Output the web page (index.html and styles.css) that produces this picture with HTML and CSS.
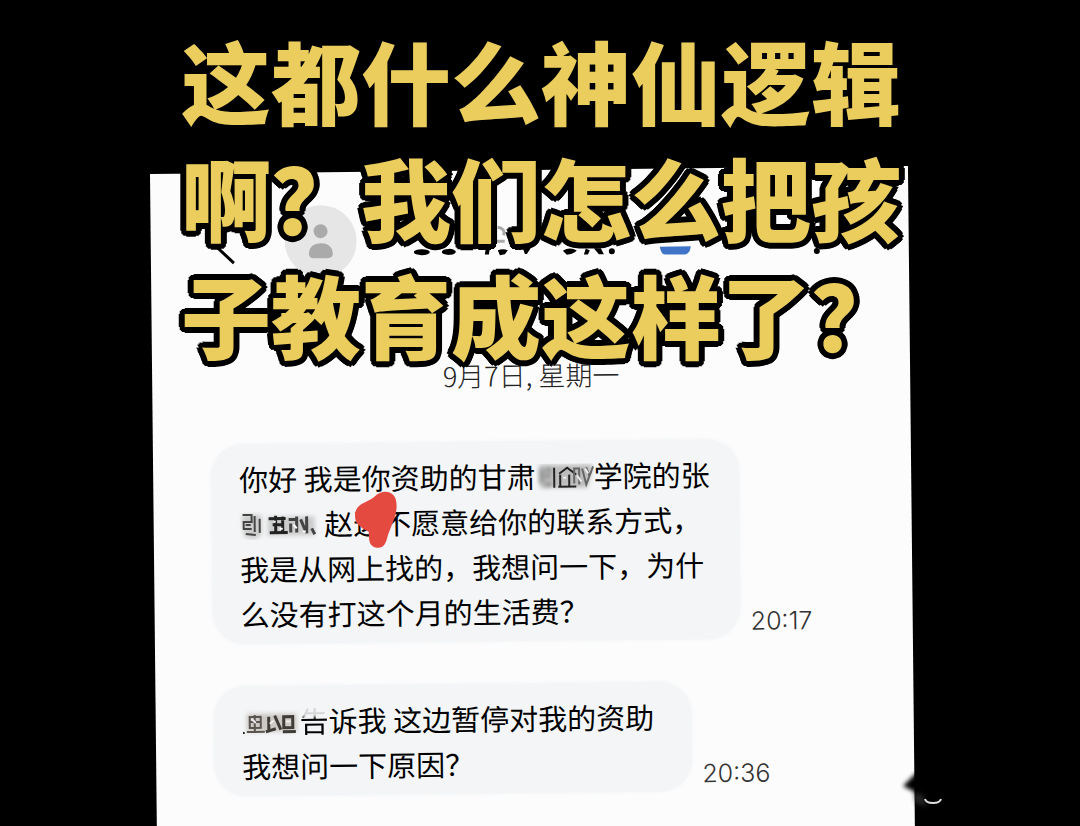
FILE: index.html
```html
<!DOCTYPE html>
<html lang="zh-CN">
<head>
    <meta charset="UTF-8">
    <title>短信</title>
    <link rel="stylesheet" href="styles.css">
</head>
<body>
    <h1 class="caption">这都什么神仙逻辑<br>啊？我们怎么把孩<br>子教育成这样了？</h1>

    <main class="sheet">
        <header class="topbar">
            <button class="back" aria-label="返回">
                <svg width="26" height="50" viewBox="0 0 26 50"><path d="M24 8 L4 27 L25 47" fill="none" stroke="#000" stroke-width="3"/></svg>
            </button>
            <svg class="avatar" width="72" height="72" viewBox="0 0 72 72">
                <circle cx="36" cy="36" r="36" fill="#e6e6e6"/>
                <circle cx="36" cy="26" r="7" fill="#aaa"/>
                <path d="M24 48 Q25 38 36 38 Q47 38 48 48 Q48 53 43 53 H29 Q24 53 24 48Z" fill="#aaa"/>
            </svg>
            <svg class="contact" width="430" height="72" viewBox="0 0 430 72">
                <ellipse cx="12" cy="48" rx="8" ry="3"/>
                <ellipse cx="39" cy="48" rx="7" ry="3"/>
                <path d="M76 45h4l-1 6h-4zM88 47q5-2 10 0l-3 4-5 1zM113 45h8l-4 6h-2zM153 48q7-4 14 0-4 4-10 4zM176 46l4 2-2 4h-4zM184 46l5 6h5l-3-6z"/>
                <circle cx="202" cy="49" r="3"/>
                <circle cx="407" cy="51" r="3"/>
                <path d="M88 24q8 1 6 8M87 38h8" fill="none" stroke="#aaa" stroke-width="3"/>
                <path d="M250 45h31q-1 8-6 8h-19q-5 0-6-8z" fill="#3f74c8"/>
            </svg>
        </header>

        <p class="date">9月7日, 星期一</p>

        <section class="message">
            <p class="bubble">
                你好 我是你资助的甘肃<svg class="smudge" width="58" height="28" viewBox="0 0 58 28">
                    <g class="haze">
                        <path d="M3 1h54l-6 23H10Q3 27 3 18z" fill="#bcbcbc"/>
                        <path d="M5 5v14M10 6h5M9 12h5M9 21h6" stroke="#777" stroke-width="3"/>
                    </g>
                    <path d="M18 4v20M22 23h18M24 11v11M23 10l8-6 9 7M33 11v11" fill="none" stroke="#222" stroke-width="2"/>
                    <path d="M38 20V5h5v16M46 5l4 16 7-18M50 4l3 8" fill="none" stroke="#666" stroke-width="2"/>
                    <path d="M27 14h3M41 12l4 6M49 5l3 5" stroke="#eee" stroke-width="2"/>
                </svg>学院的张<br>
                <svg class="smudge" width="78" height="28" viewBox="0 0 78 28">
                    <g class="haze">
                        <path d="M2 3h20v20q-9 8-18 1zM28 5h47v19H28z" fill="#ccc"/>
                    </g>
                    <path d="M3 3h9v7H4v7h8M6 13h5M15 4v16M20 7v14M6 22l10 1" fill="none" stroke="#444" stroke-width="2"/>
                    <path d="M29 7h17M33 13h11M30 21h18M36 4v17M43 5v15" fill="none" stroke="#222" stroke-width="3"/>
                    <path d="M49 8h7M51 12v9M57 5v16M61 8l5 12M67 5v17M72 17l3 6" fill="none" stroke="#444" stroke-width="3"/>
                    <path d="M34 10h2M40 17h3M54 13l3 4M63 20h3" stroke="#fff" stroke-width="2"/>
                </svg> 赵<span class="marked">这<svg class="heart" width="44" height="58" viewBox="0 0 44 58"><path d="M2 21C4 12 16 11 21 6C30-3 43 1 43 13C44 24 38 34 34 45C32 54 29 58 23 57C16 56 15 52 15 41C8 37-1 33 2 21Z" fill="#e54a41"/></svg></span>不愿意给你的联系方式，<br>
                我是从网上找的，我想问一下，为什<br>
                么没有打这个月的生活费？
            </p>
            <time class="time">20:17</time>
        </section>

        <section class="message">
            <p class="bubble short">
                <svg class="smudge" width="58" height="28" viewBox="0 0 58 28">
                    <g class="haze">
                        <path d="M5 5h50v18H5z" fill="#ccc8c4"/>
                    </g>
                    <path d="M8 8h11v11H8zM8 13h11M13 6v16M5 23h18" fill="none" stroke="#5a544e" stroke-width="2"/>
                    <path d="M27 8v13M24 23l10-3M33 7l6 14M42 8h9v11h-9zM41 23h13" fill="none" stroke="#3f3b37" stroke-width="3"/>
                    <path d="M10 10l4 4M28 15l4-3M44 13h5" stroke="#eee" stroke-width="2"/>
                    <circle cx="2" cy="24" r="1"/>
                </svg><span class="faded">告</span>诉我 这边暂停对我的资助<br>
                我想问一下原因？
            </p>
            <time class="time">20:36</time>
        </section>
    </main>

    <svg class="stamp" width="180" height="60" viewBox="0 0 180 60">
        <g class="haze">
            <path d="M3 20L16 7H60V38H20L15 26Z" fill="#000"/>
            <path d="M13 26l10 3 4 12-12-4z" fill="#444" opacity="0.5"/>
        </g>
        <path d="M25 33Q26 37 33 37Q40 37 41 33" fill="none" stroke="#ddd" stroke-width="2"/>
    </svg>
</body>
</html>
```
FILE: styles.css
```css
body {
    box-sizing: border-box;
    height: 100vh;
    margin: 0;
    padding: 174px 0 0 150px;
    background-color: #000;
    font-family: 'Noto Sans CJK SC', sans-serif;
    overflow: hidden;
    position: relative;
}

.caption {
    position: absolute;
    z-index: 2;
    top: 21px;
    left: 0;
    right: 0;
    margin: 0;
    padding-left: 181px;
    font-size: 90px;
    font-weight: 900;
    line-height: 117px;
    color: #ebcd5e;
    /* ring of shadows gives the outline its round corners */
    text-shadow: 6px 0 #000, -6px 0 #000, 0 6px #000, 0 -6px #000,
        5px 3px #000, -5px 3px #000, 5px -3px #000, -5px -3px #000,
        3px 5px #000, -3px 5px #000, 3px -5px #000, -3px -5px #000,
        4px 4px #000, -4px 4px #000, 4px -4px #000, -4px -4px #000,
        2px 2px #000, -2px 2px #000, 2px -2px #000, -2px -2px #000;
    white-space: nowrap;
}

.sheet {
    box-sizing: border-box;
    width: 81.5%;
    height: calc(100vh - 150px);
    padding: 33px 0 0 58px;
    background-color: #fcfcfd;
    transform: rotate(-0.6deg);
    transform-origin: top left;
}

.topbar {
    display: flex;
    align-items: center;
}

.back {
    padding: 0;
    border: 0;
    background: none;
}

.avatar {
    margin-left: 50px;
}

.contact {
    margin-left: 53px;
}

.date {
    margin: 80px 58px 46px 0;
    font-size: 27px;
    font-weight: 300;
    line-height: 40px;
    text-align: center;
    color: #222;
}

.message {
    display: flex;
    align-items: flex-end;
    gap: 10px;
    margin-bottom: 42px;
}

.bubble {
    box-sizing: border-box;
    width: 528px;
    margin: 0;
    padding: 12px 0 8px 28px;
    border-radius: 32px;
    background-color: #f3f5f6;
    box-shadow: 0 0 4px #f3f5f6;
    font-size: 29px;
    line-height: 45px;
    white-space: nowrap;
    color: #000;
}

.short {
    width: 478px;
}

.smudge {
    vertical-align: -4px;
}

.haze {
    filter: blur(2px);
}

.marked {
    position: relative;
}

.heart {
    position: absolute;
    left: 0;
    top: -10px;
}

/* top half of the character is rubbed out */
.faded {
    background: linear-gradient(#d8d8d8 40%, #000 50%);
    background-clip: text;
    -webkit-background-clip: text;
    color: transparent;
}

.time {
    padding-bottom: 3px;
    font-family: Inter, sans-serif;
    font-size: 25px;
    font-weight: 300;
    line-height: 30px;
    color: #333;
}

.stamp {
    position: absolute;
    right: 0;
    bottom: 0;
}
```
